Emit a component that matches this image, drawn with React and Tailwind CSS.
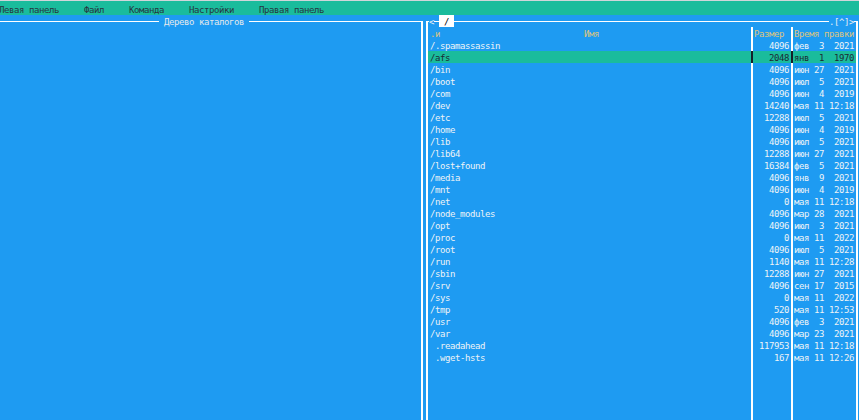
import React from 'react';

const files = [
  ['/.spamassassin', '4096', 'фев  3  2021'],
  ['/afs', '2048', 'янв  1  1970'],
  ['/bin', '4096', 'июн 27  2021'],
  ['/boot', '4096', 'июл  5  2021'],
  ['/com', '4096', 'июн  4  2019'],
  ['/dev', '14240', 'мая 11 12:18'],
  ['/etc', '12288', 'июл  5  2021'],
  ['/home', '4096', 'июн  4  2019'],
  ['/lib', '4096', 'июл  5  2021'],
  ['/lib64', '12288', 'июн 27  2021'],
  ['/lost+found', '16384', 'фев  5  2021'],
  ['/media', '4096', 'янв  9  2021'],
  ['/mnt', '4096', 'июн  4  2019'],
  ['/net', '0', 'мая 11 12:18'],
  ['/node_modules', '4096', 'мар 28  2021'],
  ['/opt', '4096', 'июл  3  2021'],
  ['/proc', '0', 'мая 11  2022'],
  ['/root', '4096', 'июл  5  2021'],
  ['/run', '1140', 'мая 11 12:28'],
  ['/sbin', '12288', 'июн 27  2021'],
  ['/srv', '4096', 'сен 17  2015'],
  ['/sys', '0', 'мая 11  2022'],
  ['/tmp', '520', 'мая 11 12:53'],
  ['/usr', '4096', 'фев  3  2021'],
  ['/var', '4096', 'мар 23  2021'],
  [' .readahead', '117953', 'мая 11 12:18'],
  [' .wget-hsts', '167', 'мая 11 12:26'],
];

const menu = ['Левая панель', 'Файл', 'Команда', 'Настройки', 'Правая панель'];

const FileRow = ({ name, size, date, selected }) => {
  const bg = selected ? 'bg-[#1abc9c] text-[#1c2a33]' : 'text-[#eef3f6]';
  const sep = selected ? 'border-[#15202a]' : 'border-white';
  return (
    <div className={`flex h-[12px] ${bg}`}>
      <div className={`w-[325px] border-r-2 ${sep} pl-[2px] pt-[1px] whitespace-pre`}>{name}</div>
      <div className={`w-[40px] border-r-2 ${sep} pr-[2px] pt-[1px] text-right`}>{size}</div>
      <div className="w-[63px] pl-[1px] pt-[1px] whitespace-pre">{date}</div>
    </div>
  );
};

const App = () => {
  return (
    <div className="w-[859px] h-[420px] overflow-hidden bg-[#1e9bf2] flex flex-col font-['DejaVu_Sans_Mono','Liberation_Mono',monospace] text-[9px] leading-[12px] tracking-[-0.42px]">
      {/* menu bar */}
      <div className="h-[15px] border-t border-[#cfd6da] bg-[#1abc9c] text-[#263540] flex gap-[25px] -ml-[1px] pt-[3px]">
        {menu.map((m) => (
          <span key={m} className="whitespace-pre">{m}</span>
        ))}
      </div>

      <div className="flex-1 flex">
        {/* left panel: directory tree */}
        <div className="w-[423px] mt-[6px] border-t border-r-2 border-white flex flex-col">
          <div className="-mt-[7px] h-[12px] flex pl-[159px]">
            <span className="bg-[#1e9bf2] text-[#e4e9ec] whitespace-pre pt-[1px]">{' Дерево каталогов '}</span>
          </div>
        </div>

        {/* right panel */}
        <div className="w-[432px] ml-[3px] mt-[6px] border-t border-x-2 border-white flex flex-col">
          <div className="-mt-[7px] h-[12px] flex text-[#e8eef2]">
            <div className="w-[1px]" />
            <span className="w-[5px] bg-[#1e9bf2] pt-[1px]">&lt;</span>
            <div className="w-[5px]" />
            <span className="w-[15px] bg-white text-black whitespace-pre pt-[1px]">{' / '}</span>
            <div className="flex-1" />
            <span className="w-[25px] bg-[#1e9bf2] whitespace-pre pt-[1px]">.[^]&gt;</span>
            <div className="w-[2px]" />
          </div>

          <div className="flex h-[12px] text-[#dcc47e]">
            <div className="w-[325px] border-r-2 border-white flex pl-[2px] pt-[1px]">
              <span className="w-[10px]">.и</span>
              <span className="flex-1 text-center pr-[8px]">Имя</span>
            </div>
            <div className="w-[40px] border-r-2 border-white pl-[1px] pt-[1px]">Размер</div>
            <div className="w-[63px] pl-[1px] pt-[1px] whitespace-pre">Время правки</div>
          </div>

          {files.map(([name, size, date], i) => (
            <FileRow key={name} name={name} size={size} date={date} selected={i === 1} />
          ))}

          <div className="flex-1 flex">
            <div className="w-[325px] border-r-2 border-white" />
            <div className="w-[40px] border-r-2 border-white" />
            <div className="w-[63px]" />
          </div>
        </div>
      </div>
    </div>
  );
};

export default App;
